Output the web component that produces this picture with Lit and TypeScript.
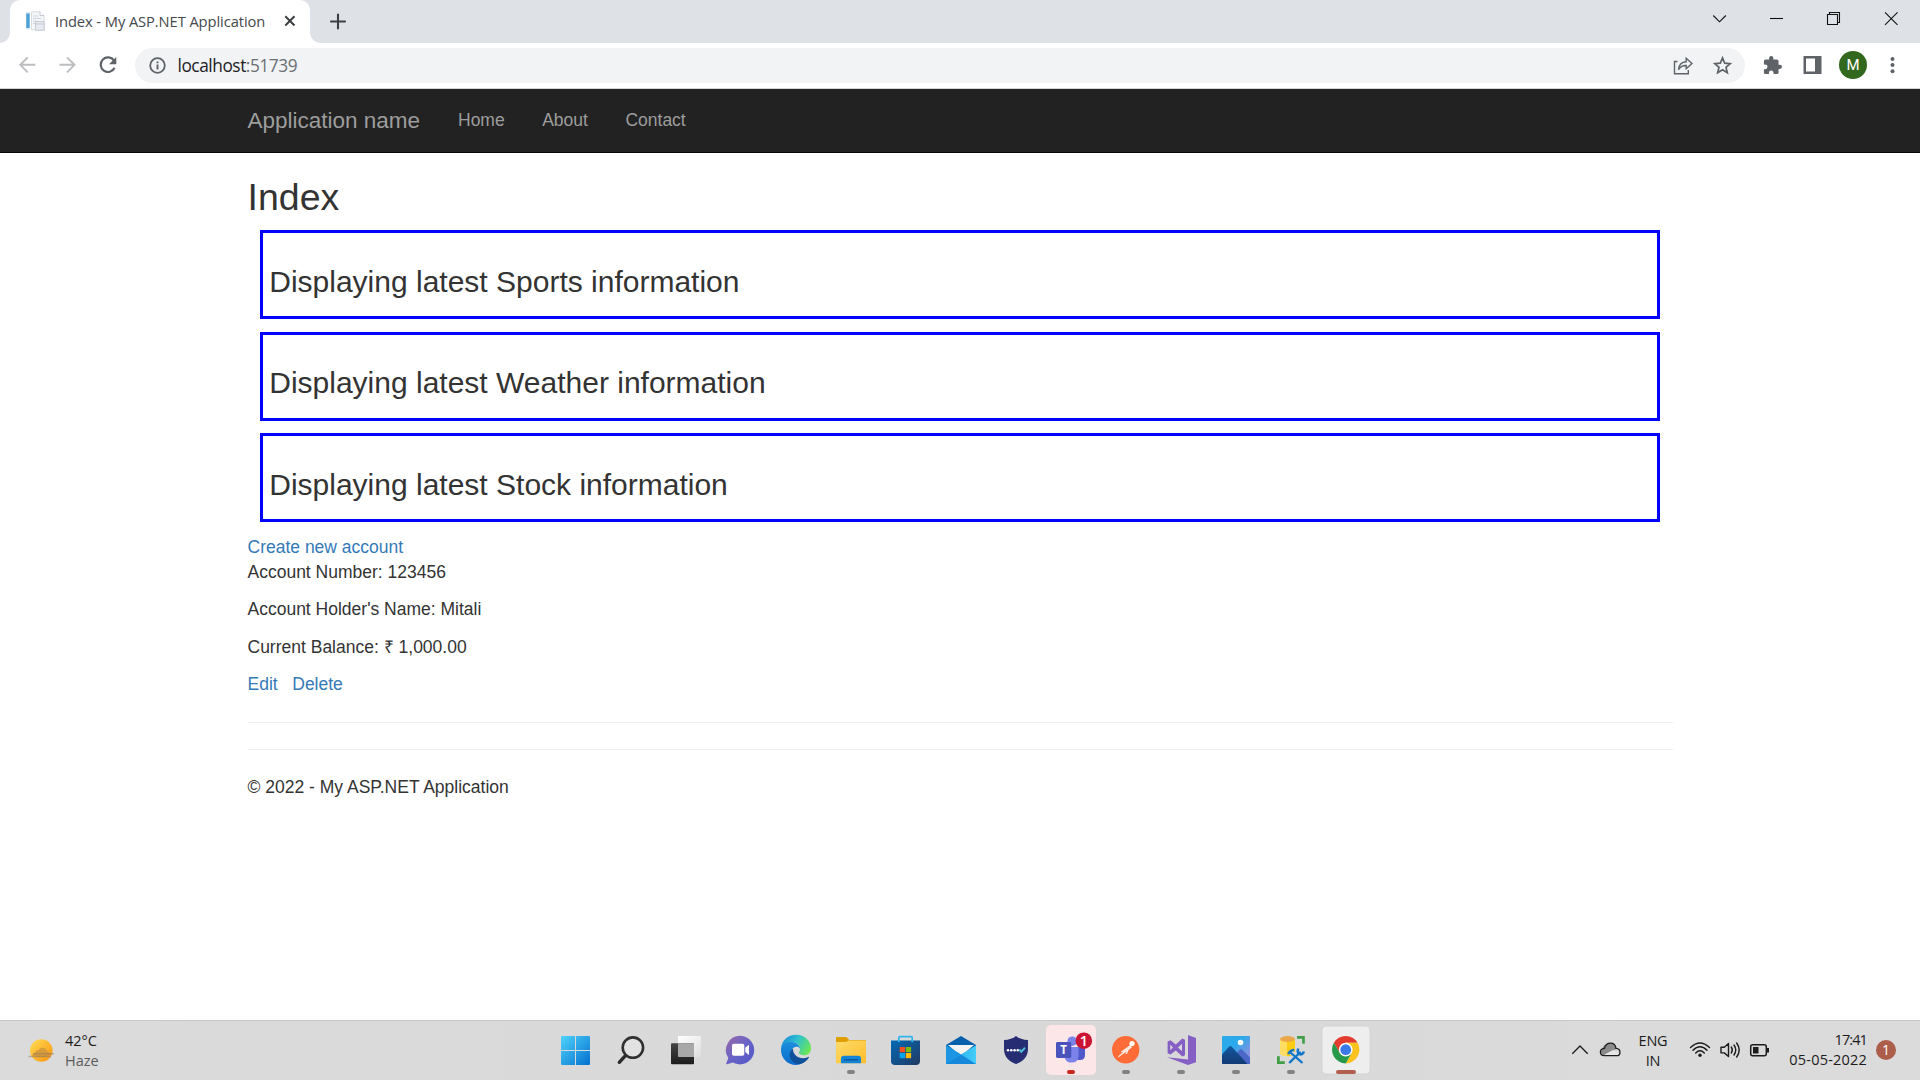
import { LitElement, html, css, svg } from "lit";
import { customElement } from "lit/decorators.js";

interface TaskItem {
  name: string;
  art: unknown;
  indicator?: "idle" | "alert" | "active";
}

const taskItems: TaskItem[] = [
  {
    name: "Start",
    art: svg`
      <defs><linearGradient id="win" gradientUnits="userSpaceOnUse" x1="13" y1="15" x2="42" y2="44"><stop offset="0" stop-color="#4fd3fb"/><stop offset="1" stop-color="#0370cf"/></linearGradient></defs>
      <path fill="url(#win)" d="M14 15H27V29H13V16Q13 15 14 15ZM28 15H41Q42 15 42 16V29H28ZM13 30H27V44H14Q13 44 13 43ZM28 30H42V43Q42 44 41 44H28Z"/>`,
  },
  {
    name: "Search",
    art: svg`
      <path d="M22.2 34.8L16.3 41.3" stroke="#2b2b2b" stroke-width="3.4" stroke-linecap="round"/>
      <circle cx="29.9" cy="26.6" r="10.2" fill="#e9e9e9" fill-opacity=".55" stroke="#303030" stroke-width="2.6"/>`,
  },
  {
    name: "Task view",
    art: svg`
      <defs><linearGradient id="tv" x1="0" y1="0" x2="1" y2="1"><stop offset="0" stop-color="#fff"/><stop offset="1" stop-color="#dedede"/></linearGradient>
      <linearGradient id="tvd" x1="0" y1="0" x2="0" y2="1"><stop offset="0" stop-color="#444"/><stop offset="1" stop-color="#1c1c1c"/></linearGradient></defs>
      <rect x="20" y="15" width="23" height="21" rx="1" fill="url(#tv)"/>
      <rect x="13" y="22.3" width="23" height="20.9" rx="1" fill="url(#tvd)"/>
      <path d="M20 22.3H36V36H21Q20 36 20 35Z" fill="#a8a8a8"/>`,
  },
  {
    name: "Chat",
    art: svg`
      <defs><linearGradient id="chat" x1="0" y1="0" x2="1" y2="1"><stop offset="0" stop-color="#9c69a8"/><stop offset=".5" stop-color="#6863c6"/><stop offset="1" stop-color="#5257c9"/></linearGradient></defs>
      <path fill="url(#chat)" d="M27.5 14.8A14.3 14.3 0 1 1 20 41.6L14 43.2Q12.8 43.4 13.3 42.2L15.3 37A14.3 14.3 0 0 1 27.5 14.8Z"/>
      <rect x="19" y="22.8" width="12.3" height="12" rx="1.8" fill="#fff"/>
      <path fill="#fff" d="M32.3 26.8L35.2 24.2Q36 23.7 36 24.6V33Q36 34 35.2 33.4L32.3 31Z"/>`,
  },
  {
    name: "Edge",
    art: svg`
      <defs>
        <linearGradient id="eg" x1="0" y1=".3" x2="1" y2=".7"><stop offset="0" stop-color="#168dd8"/><stop offset=".45" stop-color="#2fc1cf"/><stop offset="1" stop-color="#6fe84f"/></linearGradient>
        <linearGradient id="eb" x1="0" y1="0" x2="0" y2="1"><stop offset="0" stop-color="#1c8fdd"/><stop offset="1" stop-color="#0a6bcb"/></linearGradient>
      </defs>
      <path fill="url(#eg)" d="M13 28C13.4 19.8 19.8 13.8 28 13.8C36.8 13.8 43 20 43 27.2C43 31.6 39.8 34.2 36 34.2C32.7 34.2 30.8 32.8 30.8 31.8C30.8 31 32 30.3 32 28.2C32 25 29 20.8 22 20.8C17.5 20.8 14.5 23.8 13 28Z"/>
      <path fill="url(#eb)" d="M13 29C13 24 16.8 20.8 21.8 20.8C27 20.8 31.3 23.4 32 27.6C30.8 25.8 29.5 25.6 28.3 25.7C24 26.3 22.5 30 23.7 34.2C25.3 39.6 31 42 34.8 41.8C32.8 43.4 30.2 44 28 44C19.5 44 13 37.2 13 29Z"/>
      <path fill="#104f99" d="M25.2 27.6C21.6 30.2 20.6 34.6 23 38.7C25.5 42.8 31 44.4 35.2 42C37.9 40.5 40.2 38.2 41 36.3C41.2 35.8 40.7 35.6 40.2 35.9C36.3 38 31 37.5 27.8 34.5C25.5 32.3 24.7 30 25.2 27.6Z"/>`,
  },
  {
    name: "File Explorer",
    indicator: "idle",
    art: svg`
      <defs><linearGradient id="fo" x1="0" y1="0" x2="1" y2="1"><stop offset="0" stop-color="#ffdb6b"/><stop offset="1" stop-color="#fcbe2a"/></linearGradient></defs>
      <path fill="#dea006" d="M13 17.3Q13 16 14.3 16H22.5Q23.5 16 24.2 16.8L26.3 19H42Q43 19 43 20V30H13Z"/>
      <path fill="url(#fo)" d="M13 21H22.5Q23.7 21 24.6 20.2L25.5 19.4H42Q43 19.4 43 20.4V42.3H13Z"/>
      <path fill="#1484d6" d="M18 42.3V37.5Q18 34.8 20.8 34.8H35.2Q38 34.8 38 37.5V42.3Z"/>
      <path stroke="#0c4f91" stroke-width="1.2" stroke-linecap="round" d="M21.5 38.8H34.5"/>`,
  },
  {
    name: "Microsoft Store",
    art: svg`
      <defs><linearGradient id="st" x1="0" y1="0" x2="1" y2="1"><stop offset="0" stop-color="#0469b4"/><stop offset="1" stop-color="#223a63"/></linearGradient></defs>
      <path fill="none" stroke="#2fb4ee" stroke-width="1.7" d="M20.8 21V16.8Q20.8 15.7 21.9 15.7H33.1Q34.2 15.7 34.2 16.8V21"/>
      <path fill="url(#st)" d="M13 19.4H42V40Q42 44 38 44H17Q13 44 13 40Z"/>
      <path stroke="#2fb4ee" stroke-width="1.7" d="M20.8 19V21.2M34.2 19V21.2"/>
      <path fill="#f25022" d="M21.7 26H27V31.2H21.7Z"/><path fill="#7fba00" d="M27.8 26H33.1V31.2H27.8Z"/>
      <path fill="#00a4ef" d="M21.7 32H27V37.2H21.7Z"/><path fill="#ffb900" d="M27.8 32H33.1V37.2H27.8Z"/>`,
  },
  {
    name: "Mail",
    art: svg`
      <defs><linearGradient id="ml" x1="0" y1="0" x2="1" y2="0"><stop offset="0" stop-color="#17a0e8"/><stop offset="1" stop-color="#46cdf9"/></linearGradient></defs>
      <path fill="#0860ad" d="M13 24L28 15L43 24V30H13Z"/>
      <path fill="#f3f3f3" d="M15 24H41L28 35Z"/>
      <path fill="url(#ml)" d="M13 24.3L28 33.6L43 24.3V43H13Z"/>
      <path fill="#1588dc" d="M13 43L28 33.6L43 43Z"/>
      <path fill="#1c96e2" d="M13 24.3L28 33.6L13 43Z"/>`,
  },
  {
    name: "Authenticator",
    art: svg`
      <path fill="#262d73" d="M28 15C31 17.5 35 18.8 40 19V28C40 35.5 35 40.5 28 43C21 40.5 16 35.5 16 28V19C21 18.8 25 17.5 28 15Z"/>
      <g fill="#fff"><circle cx="20" cy="29.3" r="1.3"/><circle cx="23.3" cy="29.3" r="1.3"/><circle cx="26.6" cy="29.3" r="1.3"/><circle cx="29.8" cy="29.3" r="1.3"/></g>
      <path fill="none" stroke="#4db9d6" stroke-width="2" d="M31.3 28.5L33.3 30.7L37 26.8"/>`,
  },
  {
    name: "Teams",
    indicator: "alert",
    art: svg`
      <rect x="3" y="4" width="50" height="50" rx="5" fill="#fde6e7"/>
      <circle cx="29.2" cy="20.2" r="4.8" fill="#7b83eb"/>
      <path fill="#5059c9" d="M34 26H42V34Q42 39 37 39H34Z"/>
      <path fill="#7b83eb" d="M22 26H35.5V34.5Q35.5 41.6 28.7 41.6Q23.5 41.6 22 37.4Z"/>
      <rect x="13" y="21" width="15.3" height="16" rx="1.4" fill="#4a53bc"/>
      <text x="20.7" y="33" class="glyph teams-letter">T</text>
      <circle cx="40.8" cy="19.7" r="8.3" fill="#cc1533"/>
      <text x="40.8" y="25" class="glyph teams-count">1</text>`,
  },
  {
    name: "Postman",
    indicator: "idle",
    art: svg`
      <circle cx="27.7" cy="28.7" r="13.7" fill="#ff6c37"/>
      <circle cx="34" cy="22.6" r="2.6" fill="#fff"/>
      <path fill="#ffe9e1" d="M32 24L34 26.5L30.8 28.8L28.8 33.2L27.4 32.6L28.4 30.5L20.3 36.6L20 35.6L25.5 30.4L23.3 31.2L23 30.4L27.5 27.4Z"/>`,
  },
  {
    name: "Visual Studio",
    indicator: "idle",
    art: svg`
      <path fill="#865fc5" d="M35 14L43 17V41.3L35 44L14 36.3L35 38.6Z"/>
      <path fill="#865fc5" fill-rule="evenodd" d="M14.6 20.6L17.5 19.2L22.8 23.6L29.3 17.6L32 18.8V34.2L29.3 35.4L22.8 29.5L17.5 33.6L14.6 32.3ZM17.3 23.6V29.3L20 26.5ZM25 26.5L29 30.2V22.8Z"/>`,
  },
  {
    name: "Photos",
    indicator: "idle",
    art: svg`
      <defs><linearGradient id="ph" x1="0" y1="0" x2="1" y2="1"><stop offset=".4" stop-color="#2aaaea"/><stop offset=".8" stop-color="#8b91df"/></linearGradient>
      <linearGradient id="pm" x1="0" y1="0" x2="0" y2="1"><stop offset="0" stop-color="#12589f"/><stop offset="1" stop-color="#123a74"/></linearGradient></defs>
      <rect x="14" y="15" width="28" height="28" rx="1" fill="url(#ph)"/>
      <path fill="#4b67c8" d="M28 33L32 28.5Q33 27.6 34 28.5L42 36.6V43H28Z"/>
      <path fill="url(#pm)" d="M14 33.5L21.2 25.6Q22.3 24.5 23.5 25.6L39.5 43H15Q14 43 14 42Z"/>
      <circle cx="32.5" cy="21.5" r="2.8" fill="#fff"/>`,
  },
  {
    name: "SQL Server Management Studio",
    indicator: "idle",
    art: svg`
      <defs><linearGradient id="sq" x1="0" y1="0" x2="1" y2="0"><stop offset=".5" stop-color="#ffdc62"/><stop offset=".5" stop-color="#fccc13"/></linearGradient></defs>
      <path fill="#3f9e46" d="M34 15H41.8V22.8H39.2V17.8H34ZM14 35.2H16.8V40.2H21.8V43H14Z"/>
      <path fill="url(#sq)" d="M17 18V32C17 34.4 20.3 35.3 24.5 35.3S32 34.4 32 32V18Z"/>
      <ellipse cx="24.5" cy="18" rx="7.5" ry="3" fill="#eaa84a"/>
      <path stroke="#dad9da" stroke-width="5" d="M28 31L38 40M38 31L27 41"/>
      <path stroke="#1277c9" stroke-width="2.3" stroke-linecap="round" d="M28 32L38.8 41.3M37 31.5L26.8 41.3"/>
      <path fill="none" stroke="#1277c9" stroke-width="2.5" d="M25.3 33.2Q26.6 29.3 31.2 28.9M35.2 27.5Q33.8 32.2 37 33.3Q40 33.8 40.8 30.5"/>`,
  },
  {
    name: "Chrome",
    indicator: "active",
    art: svg`
      <rect x="4" y="5" width="48" height="48" rx="4.5" fill="#efeeee" stroke="#d0cfcf" stroke-width=".8"/>
      <path fill="#e33b2e" d="M15.84 21.85A13.7 13.7 0 0 1 39.56 21.85H27.7L21.77 32.1Z"/>
      <path fill="#fcc31e" d="M39.56 21.85A13.7 13.7 0 0 1 27.7 42.4L33.6 32.1L27.7 21.85Z"/>
      <path fill="#26994b" d="M15.84 21.85A13.7 13.7 0 0 0 27.7 42.4L33.6 32.1H21.8Z"/>
      <circle cx="27.7" cy="28.7" r="6.85" fill="#fff"/>
      <circle cx="27.7" cy="28.7" r="5.4" fill="#3b79e8"/>`,
  },
];

const indicators = {
  idle: svg`<rect x="24" y="49" width="8" height="4" rx="2" fill="#838282"/>`,
  alert: svg`<rect x="24" y="49" width="8" height="4" rx="2" fill="#c42b1c"/>`,
  active: svg`<rect x="18" y="49" width="20" height="4" rx="2" fill="#b0604d"/>`,
};

@customElement("browser-chrome")
export class BrowserChrome extends LitElement {
  static styles = css`
    :host { display: block; height: 89px; box-sizing: border-box; border-bottom: 1px solid #d3d5d7; background: #fff; font-family: "Open Sans", "Noto Sans", sans-serif; }
    svg { display: block; flex: none; }
    .strip { display: flex; height: 43px; background: #dee1e6; }
    .foot { width: 10px; height: 43px; background: radial-gradient(circle at 0 33px, #dee1e6 9.5px, #fff 10px); clip-path: inset(33px 0 0 0); }
    .foot.right { background: radial-gradient(circle at 100% 33px, #dee1e6 9.5px, #fff 10px); }
    .tab { display: flex; align-items: center; box-sizing: border-box; width: 300px; height: 43px; padding: 0 13px 2px 15px; background: #fff; border-radius: 10px 10px 0 0; }
    .title { margin-left: 10px; width: 229px; white-space: nowrap; font-size: 14.7px; letter-spacing: -0.08px; color: #45484c; }
    .plus { margin: 13px 0 0 8.5px; }
    .close { margin-top: 1px; }
    .window { display: flex; margin-left: auto; }
    .bar { display: flex; align-items: center; height: 45px; }
    .nav { display: flex; width: 135px; height: 45px; }
    .omni { display: flex; align-items: center; box-sizing: border-box; width: 1610px; height: 35px; margin-top: -1px; padding-left: 14px; border-radius: 18px; background: #f1f3f4; }
    .url { margin-left: 11.5px; font-size: 17.3px; letter-spacing: -0.45px; color: #6b6f74; white-space: nowrap; }
    .host { color: #202124; }
    .tools { margin-left: auto; }
    .avatar { font: 400 15px Roboto, sans-serif; fill: #fff; text-anchor: middle; }
  `;
  render() {
    return html`
      <div class="strip">
        <div class="foot"></div>
        <div class="tab">
          <svg width="20" height="20" viewBox="0 0 20 20">
            <path d="M.7 1H5V18.5H.7Z" fill="#dcebf5"/><path d="M1.3 2.5H4.6V17H1.3Z" fill="#4a9fd6"/>
            <path d="M6.5 .8H15L19 4.5V18.8H6.5Z" fill="#f5f6f8" stroke="#cfd3da" stroke-width=".8"/>
            <path d="M15 .8V4.5H19" fill="#fff" stroke="#b9bec8" stroke-width=".8"/>
            <path d="M8 5H13M8 7.5H16M8 10H11M8 12.5H10" stroke="#cdd2db"/>
            <path d="M10.5 10.5H19.2V19.3H10.5Z" fill="#e7eaf0" stroke="#bcc2cc" stroke-width=".8"/>
            <path d="M10.5 13H19" stroke="#c5cad3"/>
          </svg>
          <div class="title">Index - My ASP.NET Application</div>
          <svg class="close" width="12" height="12" viewBox="0 0 12 12"><path d="M1.3 1.3L10.5 10.5M10.5 1.3L1.3 10.5" stroke="#3c4043" stroke-width="2"/></svg>
        </div>
        <div class="foot right"></div>
        <svg class="plus" width="18" height="17" viewBox="0 0 18 17"><path d="M9 1.5V15.5M2 8.5H16" stroke="#3c4043" stroke-width="2.1" stroke-linecap="round"/></svg>
        <svg class="window" width="220" height="43" viewBox="0 0 220 43" fill="none" stroke="#111" stroke-width="1.1">
          <path d="M13.3 15.5L19.5 21.8L25.8 15.5"/><path d="M70 18.5H83"/>
          <path d="M127.5 14.5H137.5V24.5H127.5ZM129.5 14.5V12.5H139.5V22.5H137.5"/><path d="M185 12.3L197.5 24.8M197.5 12.3L185 24.8"/>
        </svg>
      </div>
      <div class="bar">
        <svg class="nav" viewBox="0 0 135 45" fill="none" stroke-width="1.9">
          <path stroke="#bbbdc0" d="M35.3 21.8H20.5M27.7 14.3L20.3 21.8L27.7 29.3M59.5 21.8H74.5M67 14.3L74.5 21.8L67 29.3"/>
          <path stroke="#5f6368" stroke-width="2.2" d="M114 17.5A7.3 7.3 0 1 0 114.6 24.8"/><path fill="#5f6368" d="M116.3 14V21.2H109Z"/>
        </svg>
        <div class="omni">
          <svg width="17" height="17" viewBox="0 0 17 17"><circle cx="8.5" cy="8.5" r="7.3" fill="none" stroke="#5f6368" stroke-width="1.8"/><path d="M8.5 7.6V12.6M8.5 4.5V6.2" stroke="#5f6368" stroke-width="1.9"/></svg>
          <div class="url"><span class="host">localhost</span>:51739</div>
          <svg class="tools" width="85" height="35" viewBox="0 0 85 35" fill="none" stroke="#5f6368">
            <path stroke-width="1.4" d="M17.5 13.5H14.5V25.8H28.3V22M18.5 21.8C18.8 16.6 21.4 14 26.2 13.7V10.3L32 15.4L26.2 20.7V17.5C22.4 17.4 20 18.8 18.5 21.8Z"/>
            <path stroke-width="1.7" d="M62.5 9.9L64.7 15.1L70.2 15.6L66 19.3L67.3 24.7L62.5 21.8L57.7 24.7L59 19.3L54.8 15.6L60.3 15.1Z"/>
          </svg>
        </div>
        <svg width="175" height="45" viewBox="0 0 175 45">
          <path transform="translate(17.2 12.2) scale(.86)" fill="#5f6368" d="M20.5 11H19V7c0-1.1-.9-2-2-2h-4V3.500a2.500 2.500 0 0 0-5 0V5H4c-1.100 0-2 .9-2 2v3.800h1.500a2.700 2.700 0 0 1 0 5.400H2V20c0 1.100.9 2 2 2h3.800v-1.500a2.700 2.700 0 0 1 5.400 0V22H17c1.100 0 2-.9 2-2v-4h1.500a2.500 2.500 0 0 0 0-5z"/>
          <path fill="#5f6368" fill-rule="evenodd" d="M58.5 13H76.5V31H58.5ZM61 15.5V28.5H70V15.5Z"/>
          <circle cx="108" cy="22" r="14" fill="#33691e"/><text x="108" y="27.3" class="avatar">M</text>
          <g fill="#5f6368"><circle cx="147.500" cy="16" r="2"/><circle cx="147.500" cy="22" r="2"/><circle cx="147.500" cy="28.200" r="2"/></g>
        </svg>
      </div>`;
  }
}

@customElement("site-page")
export class SitePage extends LitElement {
  static styles = css`
    :host { display: block; height: 931px; background: #fff; font: 17.5px/25px "Liberation Sans", Arial, sans-serif; color: #333; overflow: hidden; }
    .navbar { box-sizing: border-box; height: 63.5px; padding-left: 247.5px; display: flex; align-items: center; background: #222; border-bottom: 1px solid #080808; color: #9d9d9d; }
    .brand { font-size: 22.5px; margin-right: 37.9px; }
    .menu { display: flex; gap: 37.5px; }
    .content { width: 1425px; margin: 0 auto; padding-top: 24px; }
    h2, h3 { font-weight: 400; line-height: 1.1; margin: 0; }
    h2 { font-size: 37.5px; margin-bottom: 12.5px; }
    h3 { font-size: 30px; }
    .panel { box-sizing: border-box; height: 89px; margin: 0 12.5px 12.5px; padding: 31.25px 6.25px 0; border: 3px solid #00f; }
    p { margin: 0 0 12.5px; }
    .link { color: #337ab7; }
    .actions { display: flex; gap: 14.6px; }
    hr { margin: 25px 0 25.5px; border: 0; border-top: 1px solid #eee; }
  `;
  render() {
    return html`
      <nav class="navbar">
        <div class="brand">Application name</div>
        <div class="menu"><span>Home</span><span>About</span><span>Contact</span></div>
      </nav>
      <main class="content">
        <h2>Index</h2>
        ${["Sports", "Weather", "Stock"].map((topic) => html`<section class="panel"><h3>Displaying latest ${topic} information</h3></section>`)}
        <div class="link">Create new account</div>
        <p>Account Number: 123456</p>
        <p>Account Holder's Name: Mitali</p>
        <p>Current Balance: ₹ 1,000.00</p>
        <p class="actions"><span class="link">Edit</span><span class="link">Delete</span></p>
        <hr /><hr />
        <p>© 2022 - My ASP.NET Application</p>
      </main>`;
  }
}

@customElement("task-bar")
export class TaskBar extends LitElement {
  static styles = css`
    :host { display: flex; box-sizing: border-box; height: 60px; border-top: 1px solid #c8c7c7; background: linear-gradient(90deg, #dbdbdb, #dad9da 40%, #d9d8d9 60%, #dbdbdb 85%); font-family: "Open Sans", "Noto Sans", sans-serif; font-size: 14.5px; line-height: 20px; color: #1c1c1c; }
    svg { display: block; flex: none; }
    .weather { display: flex; width: 548px; }
    .weather-icon { margin-left: 26px; }
    .weather-text { padding: 10px 0 0 9px; letter-spacing: -0.05px; }
    .haze { color: #5b5b5b; letter-spacing: 0; }
    .apps { display: flex; width: 825px; }
    .glyph { font-family: "Open Sans", sans-serif; fill: #fff; text-anchor: middle; }
    .teams-letter { font-size: 11.5px; font-weight: 700; }
    .teams-count { font-size: 14.5px; font-weight: 600; }
    .tray { display: flex; width: 547px; }
    .language { width: 60px; padding-top: 10px; text-align: center; letter-spacing: -0.2px; }
    .clock { width: 98px; padding-top: 9px; text-align: right; letter-spacing: 0.2px; white-space: nowrap; }
    .time { letter-spacing: -0.9px; }
    .hidden { margin-left: 190px; }
    .notice { display: grid; place-items: center; width: 20px; height: 20px; margin: 19px 0 0 9px; border-radius: 50%; background: #ac5e4b; color: #fff; font-size: 14px; }
  `;
  render() {
    return html`
      <div class="weather">
        <svg class="weather-icon" width="30" height="59" viewBox="0 0 30 59">
          <defs>
            <linearGradient id="sun" x1="0" y1="0" x2="1" y2="1"><stop offset="0" stop-color="#ffdd55"/><stop offset="1" stop-color="#f9930f"/></linearGradient>
          </defs>
          <circle cx="15.3" cy="29.5" r="11.3" fill="url(#sun)"/>
          <path fill="#c9923f" fill-opacity=".7" d="M6 34C7 32.5 8 32.8 9.2 31C10.5 28.5 12.5 30 13.5 28C15 26 19 26.5 20.5 29C22 31.5 24 31.5 25.5 33.5Q23 35 21 35.5Q15 37 9 35.8Z"/>
          <path stroke="#8d7b62" stroke-opacity=".5" stroke-width="1.4" d="M2.5 35.5H25M7 32.8H28"/>
        </svg>
        <div class="weather-text"><div>42°C</div><div class="haze">Haze</div></div>
      </div>
      <div class="apps">
        ${taskItems.map((item) => html`<svg width="55" height="59" viewBox="0 0 55 59" fill="none" aria-label=${item.name}>${item.art}${item.indicator ? indicators[item.indicator] : null}</svg>`)}
      </div>
      <div class="tray">
        <svg class="hidden" width="60" height="59" viewBox="0 0 60 59" fill="none" stroke="#1c1c1c" stroke-width="1.3">
          <path d="M9.3 32.8L17 25L24.7 32.8"/>
          <path fill="#8b8b8b" stroke="none" d="M39 28Q41 22.5 47 22.3Q53 23 53.5 28L47 31L41 34Q37.500 33 38 30Z"/>
          <path fill="#e6e6e6" stroke="none" d="M41 34L50 29L56 33Q54 35 53 34.7Z"/>
          <path d="M41.5 34.7C36 34.6 36 27.7 41.5 27.3C43 20.5 52 20.5 53 27.3C58.5 27.7 58 34.7 53.5 34.7Z"/>
        </svg>
        <div class="language"><div>ENG</div><div>IN</div></div>
        <svg width="86" height="59" viewBox="0 0 86 59" fill="none" stroke="#1c1c1c" stroke-width="1.4">
          <path d="M7.5 26.5Q17 17.5 26.5 26.5M10 29.3Q17 22.3 24 29.3M12.7 32Q17 27.7 21.3 32" stroke-linecap="round"/>
          <circle cx="17" cy="34.2" r="1.7" fill="#1c1c1c" stroke="none"/>
          <path d="M38 26.3H41.3L45.5 22.5V35.5L41.3 31.9H38Z" stroke-linejoin="round"/>
          <path d="M48.3 26Q50.3 29 48.3 32M51 24Q54.5 29 51 34M53.7 22Q58.7 29 53.7 36" stroke-linecap="round"/>
          <rect x="67.7" y="23.7" width="15.6" height="11" rx="2" stroke-width="1.5"/>
          <path fill="#1c1c1c" stroke="none" d="M70 26H75.5V32.5H70ZM84 27H86V31.5H84Z"/>
        </svg>
        <div class="clock"><div class="time">17:41</div><div>05-05-2022</div></div>
        <div class="notice">1</div>
      </div>`;
  }
}

@customElement("app-root")
export class AppRoot extends LitElement {
  static styles = css`
    :host { display: block; width: 1920px; height: 1080px; overflow: hidden; background: #fff; }
  `;
  render() {
    return html`<browser-chrome></browser-chrome><site-page></site-page><task-bar></task-bar>`;
  }
}
